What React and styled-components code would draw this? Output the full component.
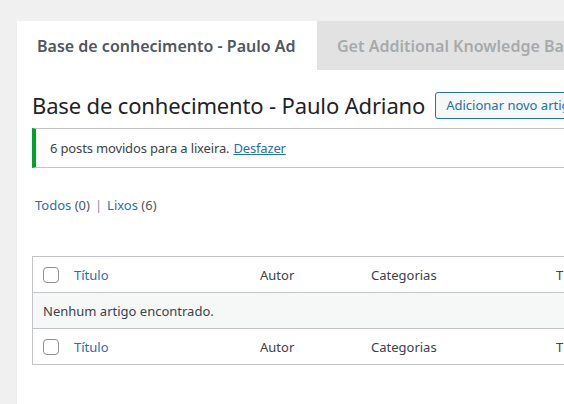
import React from 'react';
import styled, { createGlobalStyle } from 'styled-components';

const GlobalStyle = createGlobalStyle`
    html, body {
        margin: 0;
        padding: 0;
        background: #f0f0f1;
        overflow: hidden;
    }
    body {
        font-family: "Noto Sans", "Open Sans", sans-serif;
        font-size: 13px;
        color: #3c434a;
    }
`;

const StyledPage = styled.div`
    padding: 21px 0 0 17px;
    height: 404px;
    box-sizing: border-box;
`;

const StyledPanel = styled.div`
    width: 800px;
    height: 100%;
    background: #fff;
    display: flex;
    flex-direction: column;
`;

const StyledTabs = styled.div`
    display: flex;
    height: 49px;
`;

const StyledTab = styled.div`
    display: flex;
    align-items: center;
    box-sizing: border-box;
    width: ${props => props.width}px;
    padding-left: 20px;
    background: ${props => (props.active ? '#fff' : '#e2e2e2')};
    color: ${props => (props.active ? '#50575e' : '#a7aaad')};
    font-size: 16px;
    font-weight: 600;
    white-space: nowrap;
    overflow: hidden;
`;

const StyledContent = styled.div`
    padding: 0 0 0 15px;
`;

const StyledHeader = styled.div`
    display: flex;
    align-items: center;
    gap: 10px;
    margin-top: 20px;
`;

const StyledTitle = styled.h1`
    margin: 0;
    font-size: 22px;
    font-weight: 400;
    letter-spacing: -0.15px;
    color: #1d2327;
    line-height: 30px;
`;

const StyledButton = styled.button`
    font-family: inherit;
    font-size: 13px;
    color: #2271b1;
    background: #f6f7f7;
    border: 1px solid #2271b1;
    border-radius: 3px;
    height: 27px;
    padding: 0 10px;
    white-space: nowrap;
`;

const StyledNotice = styled.div`
    margin-top: 8px;
    height: 40px;
    box-sizing: border-box;
    display: flex;
    align-items: center;
    padding-left: 14px;
    border: 1px solid #c3c4c7;
    border-left: 4px solid #00a32a;
    border-right: none;
    letter-spacing: -0.15px;
`;

const StyledLink = styled.a`
    color: #2271b1;
    text-decoration: ${props => (props.underline ? 'underline' : 'none')};
    margin-left: ${props => (props.underline ? '4px' : '0')};
    cursor: pointer;
`;

const StyledFilters = styled.div`
    margin-top: 28px;
    padding-left: 3px;
    color: #50575e;
`;

const StyledSep = styled.span`
    margin: 0 5px;
    color: #8c8f94;
`;

const StyledTable = styled.div`
    margin-top: 42px;
    border: 1px solid #c3c4c7;
    border-right: none;
`;

const StyledRow = styled.div`
    display: grid;
    grid-template-columns: 33px 186px 111px 185px 1fr;
    align-items: center;
    height: 35px;
    background: ${props => (props.empty ? '#f6f7f7' : '#fff')};
    border-top: ${props => (props.first ? 'none' : '1px solid #c3c4c7')};
`;

const StyledCell = styled.div`
    padding-left: ${props => (props.check ? '10px' : '8px')};
    color: ${props => (props.link ? '#2271b1' : '#3c434a')};
    font-size: 13px;
    white-space: nowrap;
    display: flex;
    align-items: center;
`;

const StyledEmpty = styled.div`
    grid-column: 1 / -1;
    padding-left: 10px;
    color: #3c434a;
    white-space: nowrap;
`;

const StyledCheckbox = styled.span`
    display: inline-block;
    width: 14px;
    height: 14px;
    border: 1px solid #8c8f94;
    border-radius: 4px;
    background: #fff;
`;

const columns = ['Autor', 'Categorias', 'T'];

const HeadRow = ({ first }) => (
    <StyledRow first={first}>
        <StyledCell check><StyledCheckbox /></StyledCell>
        <StyledCell link>Título</StyledCell>
        {columns.map(c => <StyledCell key={c}>{c}</StyledCell>)}
    </StyledRow>
);

export default function App() {
    return (
        <>
            <GlobalStyle />
            <StyledPage>
                <StyledPanel>
                    <StyledTabs>
                        <StyledTab active width={300}>Base de conhecimento - Paulo Ad</StyledTab>
                        <StyledTab width={500}>Get Additional Knowledge Base Features</StyledTab>
                    </StyledTabs>
                    <StyledContent>
                        <StyledHeader>
                            <StyledTitle>Base de conhecimento - Paulo Adriano</StyledTitle>
                            <StyledButton>Adicionar novo artigo</StyledButton>
                        </StyledHeader>
                        <StyledNotice>
                            6 posts movidos para a lixeira.
                            <StyledLink underline>Desfazer</StyledLink>
                        </StyledNotice>
                        <StyledFilters>
                            <StyledLink>Todos</StyledLink> (0)
                            <StyledSep>|</StyledSep>
                            <StyledLink>Lixos</StyledLink> (6)
                        </StyledFilters>
                        <StyledTable>
                            <HeadRow first />
                            <StyledRow empty>
                                <StyledEmpty>Nenhum artigo encontrado.</StyledEmpty>
                            </StyledRow>
                            <HeadRow />
                        </StyledTable>
                    </StyledContent>
                </StyledPanel>
            </StyledPage>
        </>
    );
}
